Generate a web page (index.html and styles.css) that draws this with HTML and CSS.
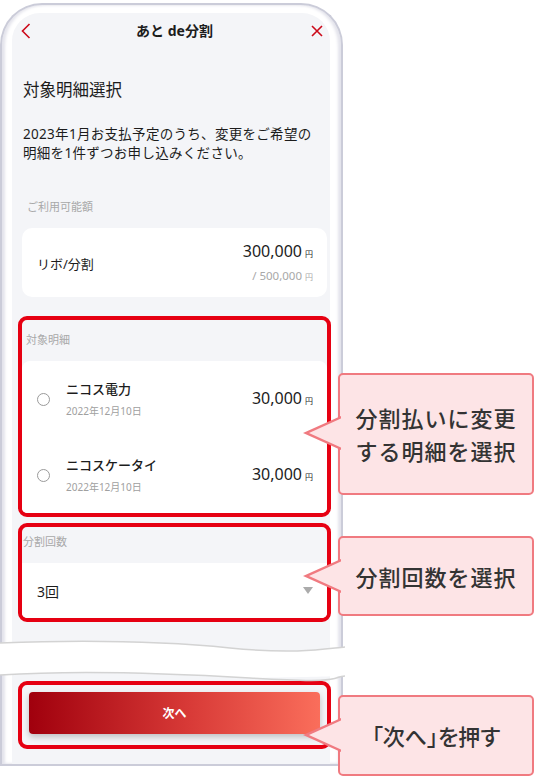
FILE: index.html
```html
<!DOCTYPE html>
<html lang="ja">

<head>
    <meta charset="UTF-8">
    <meta name="viewport" content="width=device-width, initial-scale=1.0">
    <title>あと de分割</title>
    <link rel="stylesheet" href="styles.css">
</head>

<body>
    <div class="page">
        <div class="phone phone-top">
            <div class="screen">
                <header class="nav">
                    <svg class="nav-back" width="10" height="16" viewBox="0 0 10 16">
                        <path d="M8.5 1 L1.5 8 L8.5 15" />
                    </svg>
                    <h1 class="nav-title">あと de分割</h1>
                    <svg class="nav-close" width="12" height="12" viewBox="0 0 12 12">
                        <path d="M1 1 L11 11 M11 1 L1 11" />
                    </svg>
                </header>

                <h2 class="page-heading">対象明細選択</h2>
                <p class="lead">2023年1月お支払予定のうち、変更をご希望の<br>明細を1件ずつお申し込みください。</p>

                <div class="section-label">ご利用可能額</div>
                <div class="card limit">
                    <div class="limit-name">リボ/分割</div>
                    <div class="limit-values">
                        <div class="amount">300,000<span class="yen">円</span></div>
                        <div class="amount-sub">/ 500,000<span class="yen">円</span></div>
                    </div>
                </div>

                <!-- highlighted: statement list -->
                <div class="mark mark-items">
                    <div class="mark-label">対象明細</div>
                    <ul class="items">
                        <li class="item">
                            <span class="radio"></span>
                            <div class="item-text">
                                <div class="item-name">ニコス電力</div>
                                <div class="item-date">2022年12月10日</div>
                            </div>
                            <div class="amount">30,000<span class="yen">円</span></div>
                        </li>
                        <li class="item">
                            <span class="radio"></span>
                            <div class="item-text">
                                <div class="item-name">ニコスケータイ</div>
                                <div class="item-date">2022年12月10日</div>
                            </div>
                            <div class="amount">30,000<span class="yen">円</span></div>
                        </li>
                    </ul>
                </div>

                <!-- highlighted: number of payments -->
                <div class="mark mark-count">
                    <div class="mark-label mark-label-tight">分割回数</div>
                    <div class="select">
                        <span>3回</span>
                        <span class="caret"></span>
                    </div>
                </div>
            </div>
        </div>

        <div class="cut">
            <svg width="345" height="48" viewBox="0 0 345 48">
                <path class="cut-fill" d="M0 7 C80 4 160 5 230 12 S330 12 345 11 V40 C330 40.5 300 41 250 42 C150 36 60 35 0 39 Z" />
                <path class="cut-line" d="M0 7 C80 4 160 5 230 12 S330 12 345 11" />
                <path class="cut-line" d="M0 39 C60 35 150 36 250 42 S330 41 345 40" />
            </svg>
        </div>

        <div class="phone phone-bottom">
            <div class="screen">
                <div class="mark mark-next">
                    <button class="next">次へ</button>
                </div>
            </div>
        </div>

        <div class="callout callout-items">分割払いに変更<br>する明細を選択</div>
        <div class="callout callout-count">分割回数を選択</div>
        <div class="callout callout-next">「次へ」を押す</div>
    </div>
</body>

</html>
```

FILE: styles.css
```css
*,
*::before,
*::after {
    box-sizing: border-box;
    margin: 0;
    padding: 0;
}

html,
body {
    overflow: hidden;
}

body {
    background: #fff;
    font-family: "Noto Sans", "Noto Sans CJK JP", sans-serif;
    color: #1c1c1c;
}

.page {
    position: relative;
    width: 536px;
    height: 780px;
}

/* phone frame */
.phone {
    width: 343px;
    background: #fff;
    border: 2px solid #cbccd9;
    padding: 0 11px 0 10px;
    box-shadow: inset 3px 0 3px #e4e4ec, inset -3px 0 3px #e4e4ec;
}

.phone-top {
    margin-top: 3px;
    border-bottom: 0;
    border-radius: 42px 42px 0 0;
    padding-top: 8px;
}

.phone-bottom {
    border-top: 0;
}

.screen {
    background: #f4f5f8;
    padding: 0 3px 0 10px;
}

.phone-top .screen {
    border-radius: 28px 28px 0 0;
    padding-bottom: 30px;
}

.phone-bottom .screen {
    padding-top: 29px;
    padding-bottom: 15px;
}

/* header */
.nav {
    height: 36px;
    display: grid;
    grid-template-columns: 1fr auto 1fr;
    align-items: center;
}

.nav svg {
    fill: none;
    stroke: #cc0a1a;
    stroke-width: 1.6;
}

.nav-back {
    margin-left: -1px;
}

.nav-close {
    justify-self: end;
    margin-right: 4px;
}

.nav-title {
    font-size: 14px;
    font-weight: 700;
    line-height: 20px;
}

.page-heading {
    margin-top: 29px;
    font-size: 16.5px;
    font-weight: 400;
    line-height: 24px;
    padding-left: 1px;
}

.lead {
    margin-top: 23px;
    font-size: 13.5px;
    letter-spacing: 0.3px;
    line-height: 19px;
    padding-left: 1px;
}

.section-label {
    margin-top: 36px;
    padding-left: 5px;
    font-size: 11px;
    line-height: 16px;
    color: #a8a8a8;
}

.card {
    background: #fff;
    border-radius: 10px;
}

.limit {
    margin-top: 13px;
    height: 69px;
    display: flex;
    align-items: center;
    justify-content: space-between;
    padding: 0 14px 0 15px;
}

.limit-name {
    font-size: 13px;
    padding-top: 2px;
}

.limit-values {
    text-align: right;
    padding-top: 3px;
}

.amount {
    font-size: 16px;
    line-height: 22px;
    white-space: nowrap;
}

.amount-sub {
    font-size: 11.5px;
    line-height: 22px;
    color: #a8a8a8;
}

.yen {
    font-size: 8px;
    margin-left: 3px;
}

/* red highlight boxes */
.mark {
    margin: 0 -4px;
    border: 4px solid #e60012;
    border-radius: 9px;
    overflow: hidden;
}

.mark-items {
    margin-top: 19px;
}

.mark-count {
    margin-top: 6px;
}

.mark-label {
    padding: 12px 0 13px 4px;
    font-size: 11px;
    line-height: 16px;
    color: #a8a8a8;
}

.mark-label-tight {
    padding: 7px 0 13px 1px;
}

.items {
    list-style: none;
    background: #fff;
    border-radius: 8px 8px 0 0;
}

.item {
    height: 76px;
    display: flex;
    align-items: center;
    padding: 0 14px 0 15px;
}

.radio {
    width: 13px;
    height: 13px;
    border: 1px solid #9a9a9a;
    border-radius: 50%;
}

.item-text {
    flex: 1;
    margin-left: 16px;
}

.item-name {
    font-size: 13px;
    font-weight: 500;
    line-height: 18px;
}

.item-date {
    margin-top: 5px;
    font-size: 10px;
    line-height: 16px;
    color: #a0a0a0;
}

.select {
    height: 55px;
    background: #fff;
    display: flex;
    align-items: center;
    justify-content: space-between;
    padding: 0 14px 0 15px;
    font-size: 14px;
}

.caret {
    width: 0;
    height: 0;
    border-top: 7px solid #ababab;
    border-left: 5.5px solid transparent;
    border-right: 5.5px solid transparent;
}

.mark-next {
    padding: 7px 7px 11px;
}

.next {
    display: block;
    width: 100%;
    height: 42px;
    border: none;
    border-radius: 4px;
    background: linear-gradient(to right, #a0000d, #d83a37 55%, #fa6e5b);
    box-shadow: 0 3px 6px rgba(0, 0, 0, 0.22);
    color: #fff;
    font-family: inherit;
    font-size: 12px;
    font-weight: 700;
}

/* wavy break between the two parts of the phone */
.cut {
    height: 16px;
}

.cut svg {
    display: block;
    position: relative;
    margin: -16px 0;
}

.cut-fill {
    fill: #fff;
}

.cut-line {
    fill: none;
    stroke: #d3d3d3;
    stroke-width: 1.5;
}

/* callouts */
.callout {
    position: absolute;
    left: 338px;
    width: 196px;
    display: flex;
    align-items: center;
    justify-content: center;
    text-align: center;
    background: #fde4e6;
    border: 2px solid #f07a80;
    border-radius: 5px;
    color: #333;
    font-family: "Noto Sans CJK JP", sans-serif;
    font-size: 22px;
    font-weight: 500;
    letter-spacing: 1px;
    line-height: 33px;
}

.callout::before,
.callout::after {
    content: "";
    position: absolute;
    clip-path: polygon(0 50%, 100% 0, 100% 100%);
}

.callout::before {
    left: -37px;
    top: calc(var(--tip) - 17px);
    width: 38px;
    height: 34px;
    background: #f07a80;
}

.callout::after {
    left: -31px;
    top: calc(var(--tip) - 15px);
    width: 33px;
    height: 30px;
    background: #fde4e6;
}

.callout-items {
    top: 370px;
    height: 122px;
    --tip: 58px;
}

.callout-count {
    top: 533px;
    height: 80px;
    --tip: 38px;
}

.callout-next {
    top: 692px;
    height: 81px;
    --tip: 38px;
    font-feature-settings: "palt";
    letter-spacing: 0;
}
```
